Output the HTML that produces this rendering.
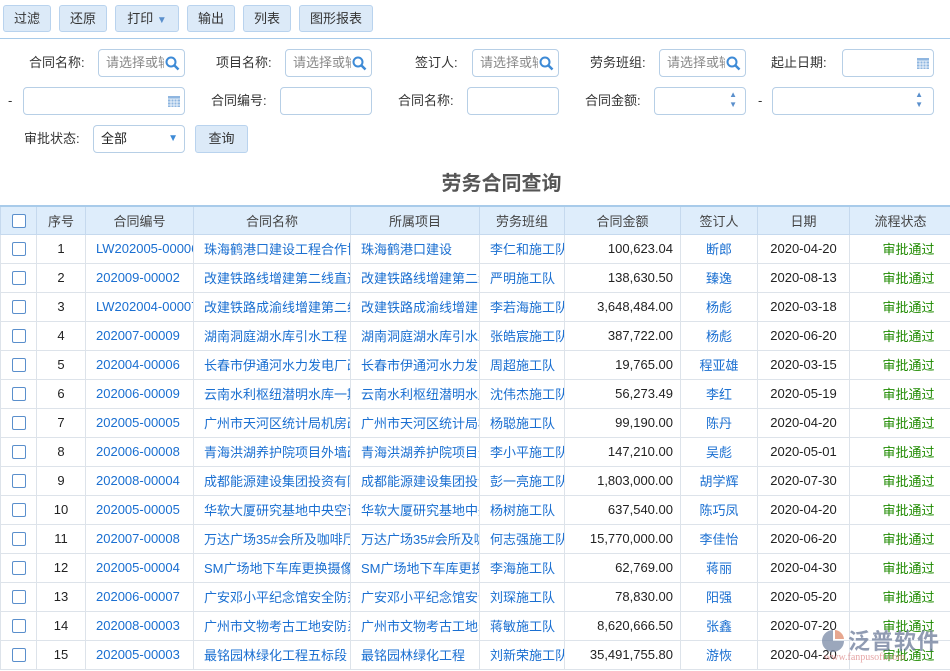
<!DOCTYPE html>
<html><head><meta charset="utf-8"><style>
*{box-sizing:border-box;margin:0;padding:0}
body{width:950px;height:671px;overflow:hidden;background:#fff;font-family:"Liberation Sans","Noto Sans CJK SC",sans-serif;font-size:13px;color:#333;position:relative}
.btn{position:absolute;top:5px;height:27px;background:#dceaf8;border:1px solid #b9d3ee;border-radius:3px;line-height:25px;text-align:center;font-size:13px;color:#333}
.hl{position:absolute;left:0;top:38px;width:950px;height:1px;background:#a8cbea}
.lb{position:absolute;font-size:13px;color:#333;line-height:16px}
.in{position:absolute;height:28px;border:1px solid #b7cfe6;border-radius:4px;background:#fff;font-size:13px;color:#888;line-height:26px;padding-left:7px;overflow:hidden;white-space:nowrap}
.in .t{display:inline-block;width:58px;overflow:hidden;vertical-align:top}
.ic{position:absolute;right:4px;top:6px}
.title{position:absolute;left:0;width:1003px;top:167px;text-align:center;font-size:20px;font-weight:bold;color:#555}
table{position:absolute;left:0;top:205px;border-collapse:collapse;table-layout:fixed;width:951px}
td,th{border:1px solid #dde3ea;white-space:nowrap;overflow:hidden;font-size:13px;font-weight:normal;padding:0 0 0 10px}
tr{height:29px}
tr.h{height:28px}
th{background:#deedfb;color:#444;border-color:#c5d9ee;text-align:center;padding:0}
tr:first-child th{border-top:2px solid #a8cbea}
td{color:#1a6fd1}
.c{text-align:center;padding:0}.r{text-align:right;color:#222;padding:0 7px 0 0}
.n{text-align:center;color:#222;padding:0}
.d{text-align:center;color:#222;padding:0}
.g{text-align:center;color:#1f8a00;padding:0 0 0 16px}
.cb{display:inline-block;width:14px;height:14px;border:1px solid #5a8fcc;border-radius:2px;background:#fff;vertical-align:middle}
</style></head><body>
<div class="btn" style="left:3px;width:48px">过滤</div>
<div class="btn" style="left:59px;width:48px">还原</div>
<div class="btn" style="left:115px;width:64px">打印 <span style="color:#5a8fcc;font-size:10px">▼</span></div>
<div class="btn" style="left:187px;width:48px">输出</div>
<div class="btn" style="left:243px;width:48px">列表</div>
<div class="btn" style="left:299px;width:74px">图形报表</div>
<div class="hl"></div>

<div class="lb" style="left:29px;top:55px">合同名称:</div>
<div class="in" style="left:98px;top:49px;width:87px"><span class="t">请选择或输</span><svg class="ic" width="15" height="15" viewBox="0 0 15 15"><circle cx="6" cy="6" r="4.5" fill="none" stroke="#3d8ad6" stroke-width="2"/><path d="M9.5 9.5l4 4" stroke="#3d8ad6" stroke-width="2.5"/></svg></div>
<div class="lb" style="left:216px;top:55px">项目名称:</div>
<div class="in" style="left:285px;top:49px;width:87px"><span class="t">请选择或输</span><svg class="ic" width="15" height="15" viewBox="0 0 15 15"><circle cx="6" cy="6" r="4.5" fill="none" stroke="#3d8ad6" stroke-width="2"/><path d="M9.5 9.5l4 4" stroke="#3d8ad6" stroke-width="2.5"/></svg></div>
<div class="lb" style="left:415px;top:55px">签订人:</div>
<div class="in" style="left:472px;top:49px;width:87px"><span class="t">请选择或输</span><svg class="ic" width="15" height="15" viewBox="0 0 15 15"><circle cx="6" cy="6" r="4.5" fill="none" stroke="#3d8ad6" stroke-width="2"/><path d="M9.5 9.5l4 4" stroke="#3d8ad6" stroke-width="2.5"/></svg></div>
<div class="lb" style="left:590px;top:55px">劳务班组:</div>
<div class="in" style="left:659px;top:49px;width:87px"><span class="t">请选择或输</span><svg class="ic" width="15" height="15" viewBox="0 0 15 15"><circle cx="6" cy="6" r="4.5" fill="none" stroke="#3d8ad6" stroke-width="2"/><path d="M9.5 9.5l4 4" stroke="#3d8ad6" stroke-width="2.5"/></svg></div>
<div class="lb" style="left:771px;top:55px">起止日期:</div>
<div class="in" style="left:842px;top:49px;width:92px"><svg class="ic" style="top:7px" width="12" height="12" viewBox="0 0 12 12"><rect x="0" y="1" width="12" height="11" fill="#8fb6e0"/><path d="M0 4h12M0 7h12M0 10h12M3 4v8M6 4v8M9 4v8" stroke="#fff" stroke-width=".8"/></svg></div>

<div class="lb" style="left:8px;top:93px">-</div>
<div class="in" style="left:23px;top:87px;width:162px"><svg class="ic" style="top:7px" width="12" height="12" viewBox="0 0 12 12"><rect x="0" y="1" width="12" height="11" fill="#8fb6e0"/><path d="M0 4h12M0 7h12M0 10h12M3 4v8M6 4v8M9 4v8" stroke="#fff" stroke-width=".8"/></svg></div>
<div class="lb" style="left:211px;top:93px">合同编号:</div>
<div class="in" style="left:280px;top:87px;width:92px"></div>
<div class="lb" style="left:398px;top:93px">合同名称:</div>
<div class="in" style="left:467px;top:87px;width:92px"></div>
<div class="lb" style="left:585px;top:93px">合同金额:</div>
<div class="in" style="left:654px;top:87px;width:92px"><span style="position:absolute;right:8px;top:2px;font-size:8px;color:#5a8fcc;line-height:10px">▲<br>▼</span></div>
<div class="lb" style="left:758px;top:93px">-</div>
<div class="in" style="left:772px;top:87px;width:162px"><span style="position:absolute;right:10px;top:2px;font-size:8px;color:#5a8fcc;line-height:10px">▲<br>▼</span></div>

<div class="lb" style="left:24px;top:131px">审批状态:</div>
<div class="in" style="left:93px;top:125px;width:92px;color:#222">全部<span style="position:absolute;right:6px;top:0;font-size:10px;color:#3d8ad6">▼</span></div>
<div class="btn" style="left:195px;top:125px;width:53px;height:28px;line-height:26px">查询</div>

<div class="title">劳务合同查询</div>

<table>
<colgroup><col style="width:36px"><col style="width:49px"><col style="width:108px"><col style="width:157px"><col style="width:129px"><col style="width:85px"><col style="width:116px"><col style="width:77px"><col style="width:92px"><col style="width:102px"></colgroup>
<tr class="h"><th><span class="cb"></span></th><th>序号</th><th>合同编号</th><th>合同名称</th><th>所属项目</th><th>劳务班组</th><th>合同金额</th><th>签订人</th><th>日期</th><th>流程状态</th></tr>
<tr><td class="c"><span class="cb"></span></td><td class="n">1</td><td>LW202005-00006</td><td>珠海鹤港口建设工程合作协议</td><td>珠海鹤港口建设</td><td>李仁和施工队</td><td class="r">100,623.04</td><td class="c">断郎</td><td class="d">2020-04-20</td><td class="g">审批通过</td></tr>
<tr><td class="c"><span class="cb"></span></td><td class="n">2</td><td>202009-00002</td><td>改建铁路线增建第二线直通线</td><td>改建铁路线增建第二线</td><td>严明施工队</td><td class="r">138,630.50</td><td class="c">臻逸</td><td class="d">2020-08-13</td><td class="g">审批通过</td></tr>
<tr><td class="c"><span class="cb"></span></td><td class="n">3</td><td>LW202004-00007</td><td>改建铁路成渝线增建第二线</td><td>改建铁路成渝线增建</td><td>李若海施工队</td><td class="r">3,648,484.00</td><td class="c">杨彪</td><td class="d">2020-03-18</td><td class="g">审批通过</td></tr>
<tr><td class="c"><span class="cb"></span></td><td class="n">4</td><td>202007-00009</td><td>湖南洞庭湖水库引水工程</td><td>湖南洞庭湖水库引水工程</td><td>张皓宸施工队</td><td class="r">387,722.00</td><td class="c">杨彪</td><td class="d">2020-06-20</td><td class="g">审批通过</td></tr>
<tr><td class="c"><span class="cb"></span></td><td class="n">5</td><td>202004-00006</td><td>长春市伊通河水力发电厂改造</td><td>长春市伊通河水力发电</td><td>周超施工队</td><td class="r">19,765.00</td><td class="c">程亚雄</td><td class="d">2020-03-15</td><td class="g">审批通过</td></tr>
<tr><td class="c"><span class="cb"></span></td><td class="n">6</td><td>202006-00009</td><td>云南水利枢纽潜明水库一期</td><td>云南水利枢纽潜明水库</td><td>沈伟杰施工队</td><td class="r">56,273.49</td><td class="c">李红</td><td class="d">2020-05-19</td><td class="g">审批通过</td></tr>
<tr><td class="c"><span class="cb"></span></td><td class="n">7</td><td>202005-00005</td><td>广州市天河区统计局机房改造</td><td>广州市天河区统计局机房</td><td>杨聪施工队</td><td class="r">99,190.00</td><td class="c">陈丹</td><td class="d">2020-04-20</td><td class="g">审批通过</td></tr>
<tr><td class="c"><span class="cb"></span></td><td class="n">8</td><td>202006-00008</td><td>青海洪湖养护院项目外墙改造</td><td>青海洪湖养护院项目外墙</td><td>李小平施工队</td><td class="r">147,210.00</td><td class="c">吴彪</td><td class="d">2020-05-01</td><td class="g">审批通过</td></tr>
<tr><td class="c"><span class="cb"></span></td><td class="n">9</td><td>202008-00004</td><td>成都能源建设集团投资有限公司</td><td>成都能源建设集团投资</td><td>彭一亮施工队</td><td class="r">1,803,000.00</td><td class="c">胡学辉</td><td class="d">2020-07-30</td><td class="g">审批通过</td></tr>
<tr><td class="c"><span class="cb"></span></td><td class="n">10</td><td>202005-00005</td><td>华软大厦研究基地中央空调</td><td>华软大厦研究基地中央</td><td>杨树施工队</td><td class="r">637,540.00</td><td class="c">陈巧凤</td><td class="d">2020-04-20</td><td class="g">审批通过</td></tr>
<tr><td class="c"><span class="cb"></span></td><td class="n">11</td><td>202007-00008</td><td>万达广场35#会所及咖啡厅</td><td>万达广场35#会所及咖啡</td><td>何志强施工队</td><td class="r">15,770,000.00</td><td class="c">李佳怡</td><td class="d">2020-06-20</td><td class="g">审批通过</td></tr>
<tr><td class="c"><span class="cb"></span></td><td class="n">12</td><td>202005-00004</td><td>SM广场地下车库更换摄像头</td><td>SM广场地下车库更换</td><td>李海施工队</td><td class="r">62,769.00</td><td class="c">蒋丽</td><td class="d">2020-04-30</td><td class="g">审批通过</td></tr>
<tr><td class="c"><span class="cb"></span></td><td class="n">13</td><td>202006-00007</td><td>广安邓小平纪念馆安全防范</td><td>广安邓小平纪念馆安全</td><td>刘琛施工队</td><td class="r">78,830.00</td><td class="c">阳强</td><td class="d">2020-05-20</td><td class="g">审批通过</td></tr>
<tr><td class="c"><span class="cb"></span></td><td class="n">14</td><td>202008-00003</td><td>广州市文物考古工地安防系统</td><td>广州市文物考古工地安防</td><td>蒋敏施工队</td><td class="r">8,620,666.50</td><td class="c">张鑫</td><td class="d">2020-07-20</td><td class="g">审批通过</td></tr>
<tr><td class="c"><span class="cb"></span></td><td class="n">15</td><td>202005-00003</td><td>最铭园林绿化工程五标段</td><td>最铭园林绿化工程</td><td>刘新荣施工队</td><td class="r">35,491,755.80</td><td class="c">游恢</td><td class="d">2020-04-20</td><td class="g">审批通过</td></tr>
</table>
<div style="position:absolute;left:820px;top:624px;width:125px;height:46px;opacity:.75">
<svg style="position:absolute;left:0;top:4px" width="26" height="26" viewBox="0 0 26 26"><path d="M13 2A11 11 0 1 0 24 13L13 13Z" fill="#7a8aa6"/><path d="M15 2A10 10 0 0 1 24 11L15 11Z" fill="#e08a6a"/></svg>
<div style="position:absolute;left:28px;top:0;font-size:22px;color:#6b7a99;font-weight:bold;letter-spacing:1px">泛普软件</div>
<div style="position:absolute;left:4px;top:28px;font-size:10px;color:#d88;font-family:'Liberation Serif',serif">www.fanpusoft.com</div>
</div>
</body></html>
